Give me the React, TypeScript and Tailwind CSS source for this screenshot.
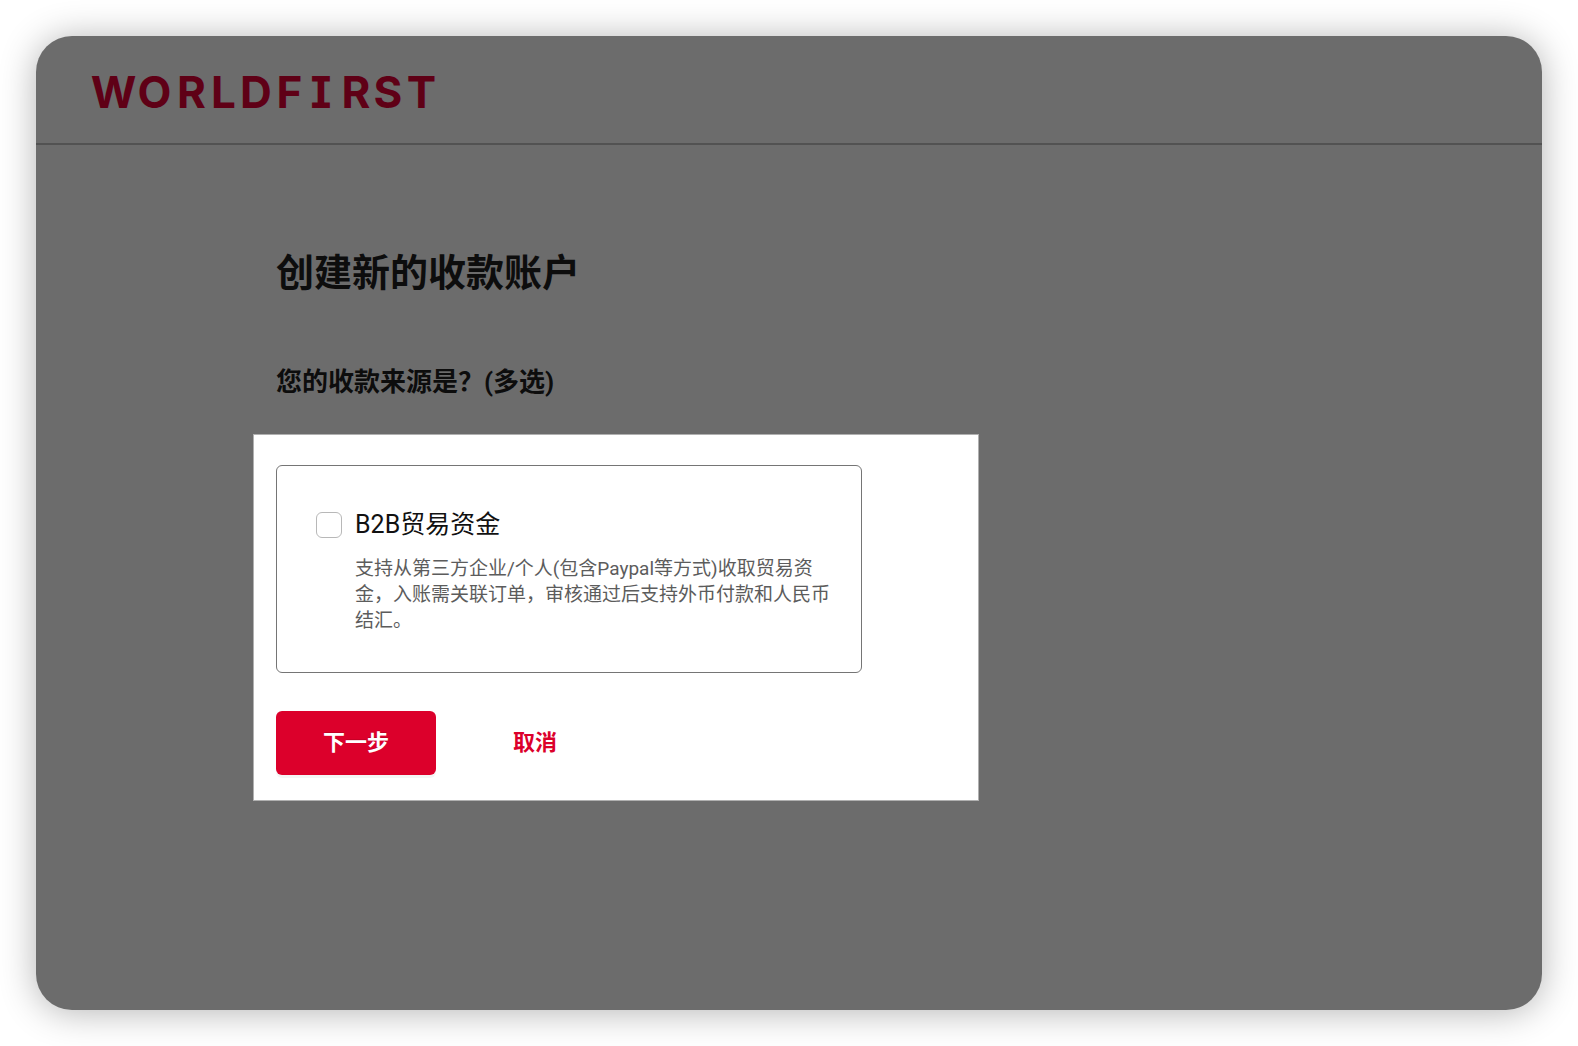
function Logo() {
  return (
    <svg width="348" height="60" viewBox="90 62 348 60" role="img" aria-label="WorldFirst">
      {/* cv08 gives the capital I its slab serifs */}
      <text
        x="113.5 154.5 191.5 223.5 256 289.5 321 356 388 421.5"
        y="108"
        textAnchor="middle"
        className="fill-[#5f0016] font-['Inter',sans-serif] text-[44px] font-bold [font-feature-settings:'cv08']"
      >
        WORLDFIRST
      </text>
    </svg>
  );
}

const sources = [
  {
    id: 'b2b',
    title: 'B2B贸易资金',
    desc: '支持从第三方企业/个人(包含Paypal等方式)收取贸易资金，入账需关联订单，审核通过后支持外币付款和人民币结汇。',
  },
];

export default function App() {
  return (
    <div lang="zh-CN" className="min-h-screen bg-white p-9 flex flex-col font-['Roboto','Noto_Sans_CJK_SC',sans-serif]">
      <div className="flex-1 rounded-[36px] overflow-hidden bg-[#6c6c6c] shadow-[0_2px_36px_rgba(0,0,0,0.3)]">
        <header className="h-[109px] flex items-center px-[54px] pt-[5px] border-b-2 border-[#525252]">
          <Logo />
        </header>

        <main className="pt-[108px] px-[217px] pb-16 text-[#0d0d0d]">
          <h1 className="ml-[23px] text-[38px] leading-10 font-bold">创建新的收款账户</h1>
          <h2 className="ml-[23px] mt-[73px] text-[26px] leading-8 font-bold">您的收款来源是？(多选)</h2>

          <form className="mt-9 max-w-[726px] bg-white border border-[#b0b0b0] px-[22px] pt-[30px] pb-[25px]">
            {sources.map(({ id, title, desc }) => (
              <div key={id} className="max-w-[586px] h-[208px] flex items-start gap-[13px] rounded-md border border-[#757575] pl-[39px] pr-5 pt-[43px]">
                <input
                  id={id}
                  type="checkbox"
                  aria-describedby={`${id}-desc`}
                  className="mt-[3px] size-[26px] shrink-0 appearance-none rounded-md border border-[#b8b8b8] bg-white checked:bg-[#dc002b]"
                />
                <div>
                  <label htmlFor={id} className="block text-[25px] leading-8 text-[#111]">{title}</label>
                  <p id={`${id}-desc`} className="mt-[15px] text-[19px] leading-[26px] text-[#5c5c5c]">{desc}</p>
                </div>
              </div>
            ))}

            <div className="mt-[38px] flex gap-[19px] text-[22px] font-bold">
              <button type="button" className="w-40 h-16 pb-0.5 rounded-md bg-[#dc002b] text-white shadow-[0_3px_0_rgba(0,0,0,0.04)] [text-shadow:0_-1px_0_rgba(0,0,0,0.12)]">
                下一步
              </button>
              <button type="button" className="w-40 h-16 pb-0.5 text-[#dc002b]">取消</button>
            </div>
          </form>
        </main>
      </div>
    </div>
  );
}
